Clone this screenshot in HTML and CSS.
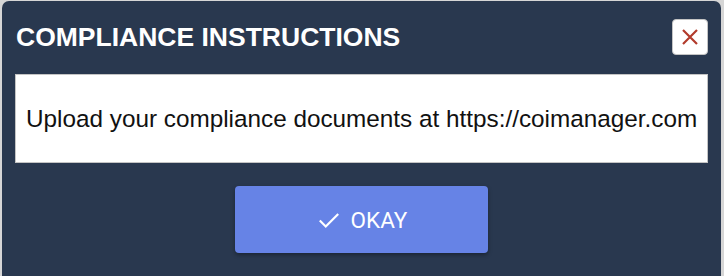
FILE: index.html
```html
<!DOCTYPE html>
<html lang="en">
<head>
  <meta charset="UTF-8" />
  <title>Compliance Instructions</title>
  <link rel="stylesheet" href="styles.css">
</head>
<body>
  <div class="dialog">
    <div class="dialog-header">
      <h2>COMPLIANCE INSTRUCTIONS</h2>
      <button class="close-btn" type="button" aria-label="Close">
        <svg width="18" height="18" viewBox="0 0 18 18">
          <path d="M2 2 L16 16 M16 2 L2 16" stroke="#b23b2c" stroke-width="2.2" fill="none" />
        </svg>
      </button>
    </div>

    <div class="message">
      Upload your compliance documents at https://coimanager.com
    </div>

    <div class="actions">
      <button class="okay-btn" type="button">
        <svg width="26" height="26" viewBox="0 0 24 24">
          <path d="M3.5 12.5 L9 18 L20.5 6.5" stroke="#ffffff" stroke-width="2" fill="none" />
        </svg>
        OKAY
      </button>
    </div>
  </div>
</body>
</html>
```

FILE: styles.css
```css
:root {
  --azul-oscuro: #29384f;
  --azul-boton: #6683e6;
  --blanco: #ffffff;
  --gris-borde: #c4c4c4;
  --gris-fondo: #d6d6d6;
}

body {
  margin: 0;
  background-color: var(--gris-fondo);
  font-family: 'Liberation Sans', Arial, sans-serif;
  overflow: hidden;
}

.dialog {
  margin: 1px 0 0 2px;
  width: 719px;
  height: 275px;
  background-color: var(--azul-oscuro);
  border-radius: 7px 7px 0 0;
  padding: 18px 13px 0 13px;
  box-sizing: border-box;
}

.dialog-header {
  display: flex;
  justify-content: space-between;
  align-items: center;
  padding-left: 1px;
}

h2 {
  margin: 0;
  color: var(--blanco);
  font-size: 26.5px;
  font-weight: bold;
}

.close-btn {
  width: 36px;
  height: 36px;
  padding: 0;
  display: flex;
  align-items: center;
  justify-content: center;
  background-color: var(--blanco);
  border: 1px solid var(--gris-borde);
  border-radius: 4px;
  cursor: pointer;
}

.message {
  margin-top: 19px;
  height: 89px;
  box-sizing: border-box;
  background-color: var(--blanco);
  border: 1px solid var(--gris-borde);
  display: flex;
  align-items: center;
  padding-left: 10px;
  font-size: 24.3px;
  color: #111111;
  white-space: nowrap;
}

.actions {
  display: flex;
  justify-content: center;
  margin-top: 23px;
}

.okay-btn {
  width: 253px;
  height: 67px;
  display: flex;
  align-items: center;
  justify-content: center;
  gap: 9px;
  background-color: var(--azul-boton);
  color: var(--blanco);
  font-family: Roboto, sans-serif;
  font-size: 22.5px;
  border: none;
  border-radius: 4px;
  box-shadow: 0 2px 4px rgba(0, 0, 0, 0.35);
  cursor: pointer;
}
```
